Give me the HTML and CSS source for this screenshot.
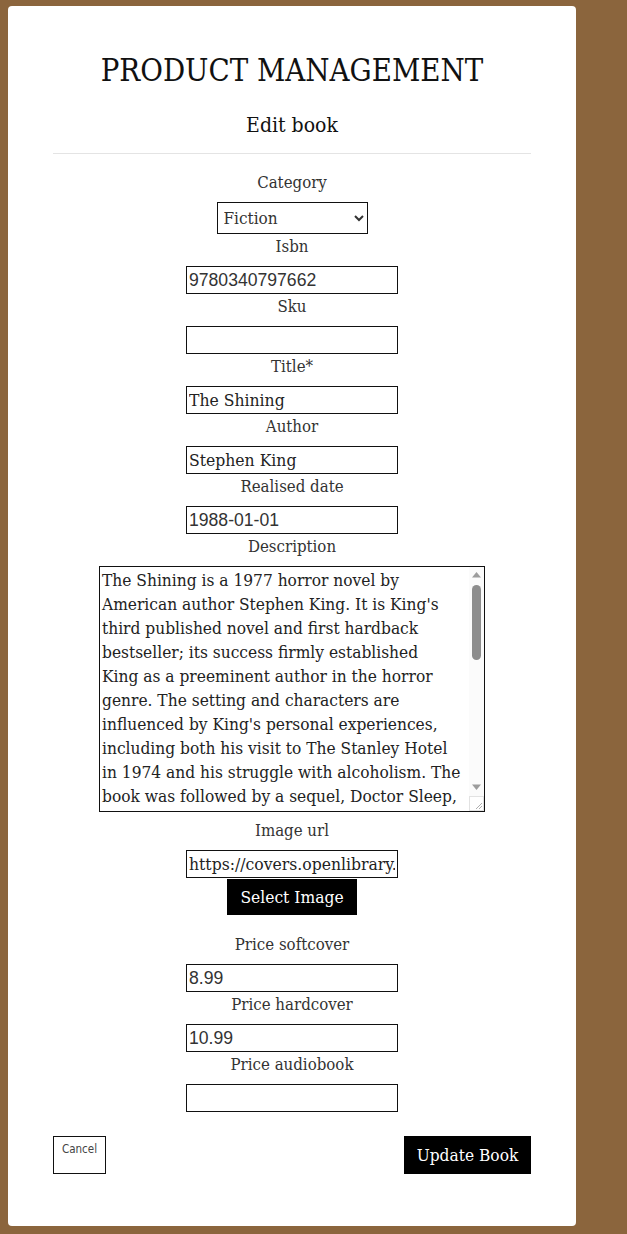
FILE: index.html
```html
<!DOCTYPE html>
<html lang="en">
<head>
<meta charset="utf-8">
<title>Product Management</title>
<link rel="stylesheet" href="styles.css">
</head>
<body>
<main class="card">
  <h1 class="title">PRODUCT MANAGEMENT</h1>
  <h2 class="subtitle">Edit book</h2>
  <hr class="divider">
  <form class="form">
    <label class="label" for="category">Category</label>
    <select id="category" class="select">
      <option>Fiction</option>
    </select>
    <label class="label" for="isbn">Isbn</label>
    <input id="isbn" class="input num" type="text" value="9780340797662">
    <label class="label" for="sku">Sku</label>
    <input id="sku" class="input" type="text" value="">
    <label class="label" for="title">Title*</label>
    <input id="title" class="input" type="text" value="The Shining">
    <label class="label" for="author">Author</label>
    <input id="author" class="input" type="text" value="Stephen King">
    <label class="label" for="date">Realised date</label>
    <input id="date" class="input num" type="text" value="1988-01-01">
    <label class="label" for="desc">Description</label>
    <div class="ta-wrap">
      <textarea id="desc" class="textarea" wrap="off">The Shining is a 1977 horror novel by
American author Stephen King. It is King's
third published novel and first hardback
bestseller; its success firmly established
King as a preeminent author in the horror
genre. The setting and characters are
influenced by King's personal experiences,
including both his visit to The Stanley Hotel
in 1974 and his struggle with alcoholism. The
book was followed by a sequel, Doctor Sleep,
published in 2013.</textarea>
      <svg class="scrollbar" width="15" height="244" viewBox="0 0 15 244" aria-hidden="true">
        <rect x="0" y="0" width="15" height="244" fill="#fbfbfb"/>
        <polygon points="3,10.5 12,10.5 7.5,5" fill="#9c9c9c"/>
        <rect x="3" y="18" width="9" height="75" rx="4.5" fill="#8d8d8d"/>
        <polygon points="3,217.5 12,217.5 7.5,223" fill="#9c9c9c"/>
        <rect x="0.5" y="229.5" width="14" height="14" fill="#fff" stroke="#e2e2e2"/>
        <line x1="13" y1="236" x2="7" y2="242" stroke="#9a9a9a" stroke-width="0.8"/>
        <line x1="13" y1="239" x2="10" y2="242" stroke="#9a9a9a" stroke-width="0.8"/>
      </svg>
    </div>
    <label class="label" for="img">Image url</label>
    <input id="img" class="input" type="text" value="https://covers.openlibrary.org/b/isbn/9780340797662-L.jpg">
    <button type="button" class="btn-select">Select Image</button>
    <label class="label label-gap" for="soft">Price softcover</label>
    <input id="soft" class="input num" type="text" value="8.99">
    <label class="label" for="hard">Price hardcover</label>
    <input id="hard" class="input num" type="text" value="10.99">
    <label class="label" for="audio">Price audiobook</label>
    <input id="audio" class="input num" type="text" value="">
    <div class="actions">
      <button type="button" class="btn-cancel">Cancel</button>
      <button type="submit" class="btn-update">Update Book</button>
    </div>
  </form>
</main>
</body>
</html>
```
FILE: styles.css
```css
html, body {
  margin: 0;
  padding: 0;
}
body {
  background: #8b653d;
  font-family: "DejaVu Serif Condensed", "DejaVu Serif", serif;
  color: #222;
}
.card {
  box-sizing: border-box;
  width: 568px;
  height: 1220px;
  margin: 6px 0 0 8px;
  background: #fff;
  border-radius: 4px;
  padding: 40px 45px 0 45px;
}
.title {
  margin: 0;
  font-weight: normal;
  font-size: 30.8px;
  line-height: 48px;
  text-align: center;
  color: #111;
}
.subtitle {
  margin: 16px 0 0 0;
  font-weight: normal;
  font-size: 21px;
  line-height: 30px;
  text-align: center;
  color: #111;
}
.divider {
  border: 0;
  border-top: 1px solid #e4e4e4;
  margin: 13px 0 0 0;
}
.form {
  display: flex;
  flex-direction: column;
  align-items: center;
  padding-top: 16px;
}
.label {
  display: block;
  font-size: 16.7px;
  line-height: 24px;
  color: #333;
  text-align: center;
}
.label-gap {
  margin-top: 17px;
}
.select {
  box-sizing: border-box;
  width: 151px;
  height: 32px;
  margin-top: 8px;
  border: 1px solid #111;
  border-radius: 0;
  background: #fff;
  font-family: inherit;
  font-size: 17px;
  color: #333;
  padding: 0 2px;
}
.input {
  box-sizing: border-box;
  width: 212px;
  height: 28px;
  margin-top: 8px;
  border: 1px solid #111;
  border-radius: 0;
  padding: 0 2px;
  font-family: inherit;
  font-size: 17.4px;
  color: #222;
  background: #fff;
  outline: none;
}
.num {
  font-family: "Liberation Sans", Arial, sans-serif;
  font-size: 17.6px;
  color: #333;
}
.ta-wrap {
  position: relative;
  margin: 8px 0 6px 0;
  line-height: 0;
}
.textarea {
  box-sizing: border-box;
  width: 386px;
  height: 246px;
  margin: 0;
  border: 1px solid #111;
  padding: 1px 16px 1px 2px;
  font-family: inherit;
  font-size: 17.2px;
  line-height: 24px;
  color: #222;
  resize: none;
  overflow: hidden;
  white-space: pre;
  display: block;
}
.scrollbar {
  position: absolute;
  top: 1px;
  right: 1px;
  pointer-events: none;
}
.btn-select {
  width: 130px;
  height: 36px;
  margin-top: 1px;
  border: 0;
  background: #000;
  color: #fff;
  font-family: inherit;
  font-size: 17.3px;
  padding: 0;
}
.actions {
  align-self: stretch;
  display: flex;
  justify-content: space-between;
  align-items: flex-start;
  margin-top: 24px;
}
.btn-cancel {
  box-sizing: border-box;
  width: 53px;
  height: 38px;
  border: 1px solid #111;
  background: #fff;
  color: #444;
  font-family: "DejaVu Sans Condensed", sans-serif;
  font-size: 11.5px;
  padding: 5px 0 0 0;
  display: flex;
  justify-content: center;
  align-items: flex-start;
}
.btn-update {
  width: 127px;
  height: 38px;
  border: 0;
  background: #000;
  color: #fff;
  font-family: inherit;
  font-size: 17.2px;
  padding: 0;
}
```
